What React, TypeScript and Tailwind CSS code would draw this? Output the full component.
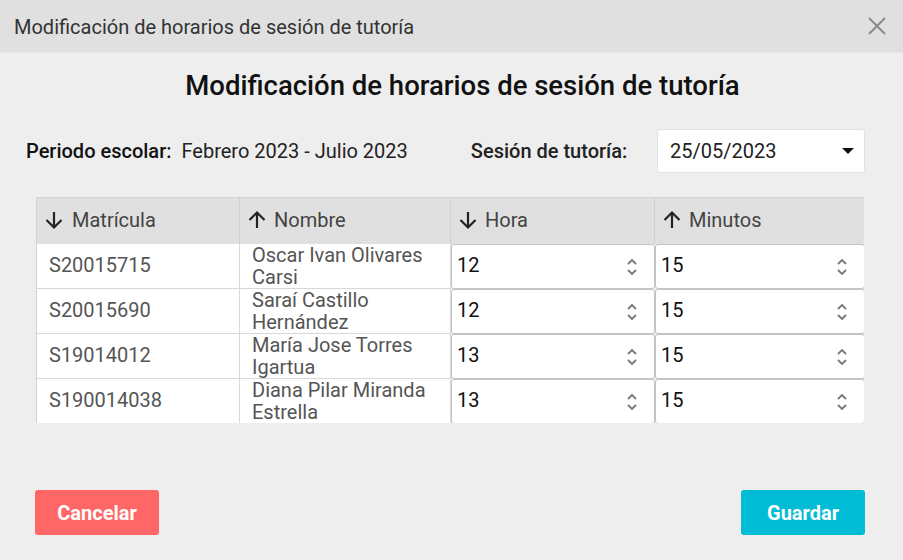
import React from "react"

const rows = [
  { matricula: "S20015715", nombre: "Oscar Ivan Olivares Carsi", hora: "12", minutos: "15" },
  { matricula: "S20015690", nombre: "Saraí Castillo Hernández", hora: "12", minutos: "15" },
  { matricula: "S19014012", nombre: "María Jose Torres Igartua", hora: "13", minutos: "15" },
  { matricula: "S190014038", nombre: "Diana Pilar Miranda Estrella", hora: "13", minutos: "15" },
]

const ArrowDown = () => (
  <svg width="20" height="20" viewBox="0 0 20 20" className="shrink-0">
    <path d="M10 2v15.5M2.5 10 10 17.5l7.5-7.5" fill="none" stroke="#222" strokeWidth="2.2" />
  </svg>
)

const ArrowUp = () => (
  <svg width="20" height="20" viewBox="0 0 20 20" className="shrink-0">
    <path d="M10 18V2.5M2.5 10 10 2.5l7.5 7.5" fill="none" stroke="#222" strokeWidth="2.2" />
  </svg>
)

const Spinner = () => (
  <svg width="12" height="24" viewBox="0 0 12 24" className="shrink-0">
    <path d="M2 9l4-4 4 4M2 15l4 4 4-4" fill="none" stroke="#777" strokeWidth="1.8" />
  </svg>
)

const NumberCell = ({ value }: { value: string }) => (
  <div className="h-[45px] bg-white border border-[#c4c4c4] rounded-[3px] flex items-center justify-between pl-[5px] pr-[16px] text-[20px] text-[#111]">
    <span className="-mt-[3px]">{value}</span>
    <Spinner />
  </div>
)

const App = () => {
  return (
    <div className="w-[903px] h-[560px] bg-[#eeeeee] flex flex-col font-['Roboto',sans-serif]">
      <div className="h-[53px] bg-[#e0e0e0] border-b border-[#e8e8e8] flex items-center justify-between pl-[14px] pr-[16px]">
        <span className="text-[20px] text-[#333] pt-[2px]">Modificación de horarios de sesión de tutoría</span>
        <svg width="20" height="20" viewBox="0 0 20 20">
          <path d="M2 2l16 16M18 2L2 18" stroke="#8a8a8a" strokeWidth="2" />
        </svg>
      </div>

      <h1 className="mt-[15px] pl-[22px] text-center text-[27.5px] font-medium text-[#111] leading-[36px]">
        Modificación de horarios de sesión de tutoría
      </h1>

      <div className="mt-[25px] flex items-center h-[44px] pl-[26px] pr-[38px]">
        <span className="text-[20px] font-medium text-[#111]">Periodo escolar:</span>
        <span className="ml-[10px] text-[20px] text-[#222]">Febrero 2023 - Julio 2023</span>
        <span className="ml-[63px] text-[20px] font-medium text-[#222]">Sesión de tutoría:</span>
        <div className="ml-auto w-[208px] h-[44px] bg-white border border-[#e2e2e2] rounded-[3px] flex items-center justify-between pl-[12px] pr-[10px] text-[20px] text-[#222]">
          <span>25/05/2023</span>
          <svg width="12" height="8" viewBox="0 0 12 8">
            <path d="M0 1h12L6 7z" fill="#111" />
          </svg>
        </div>
      </div>

      <div className="mt-[24px] ml-[36px] w-[828px] h-[226px] overflow-hidden border-l border-t border-[#d4d4d4]">
        <div className="grid grid-cols-[203px_211px_204px_210px] h-[46px] bg-[#e0e0e0] text-[20px] text-[#444]">
          <div className="flex items-center gap-[8px] pl-[7px] pb-[2px] border-r border-[#d0d0d0]">
            <ArrowDown />
            <span>Matrícula</span>
          </div>
          <div className="flex items-center gap-[7px] pl-[7px] pb-[2px] border-r border-[#d0d0d0]">
            <ArrowUp />
            <span>Nombre</span>
          </div>
          <div className="flex items-center gap-[7px] pl-[7px] pb-[2px] border-r border-[#d0d0d0]">
            <ArrowDown />
            <span>Hora</span>
          </div>
          <div className="flex items-center gap-[7px] pl-[7px] pb-[2px]">
            <ArrowUp />
            <span>Minutos</span>
          </div>
        </div>
        {rows.map((r) => (
          <div key={r.matricula} className="grid grid-cols-[203px_211px_204px_210px] grid-rows-[45px] h-[45px] text-[20px] text-[#555]">
            <div className="h-[45px] bg-white flex items-center pl-[12px] pb-[3px] border-r border-b border-[#d8d8d8]">{r.matricula}</div>
            <div className="h-[45px] bg-white pl-[12px] pr-[8px] leading-[22px] border-r border-b border-[#d8d8d8]">
              {r.nombre}
            </div>
            <NumberCell value={r.hora} />
            <NumberCell value={r.minutos} />
          </div>
        ))}
      </div>

      <div className="mt-auto mb-[25px] flex items-center justify-between pl-[35px] pr-[38px]">
        <button className="w-[124px] h-[45px] bg-[#ff6666] rounded-[3px] text-white text-[20px] font-bold">
          Cancelar
        </button>
        <button className="w-[124px] h-[45px] bg-[#00bcd4] rounded-[3px] text-white text-[20px] font-bold">
          Guardar
        </button>
      </div>
    </div>
  )
}

export default App
